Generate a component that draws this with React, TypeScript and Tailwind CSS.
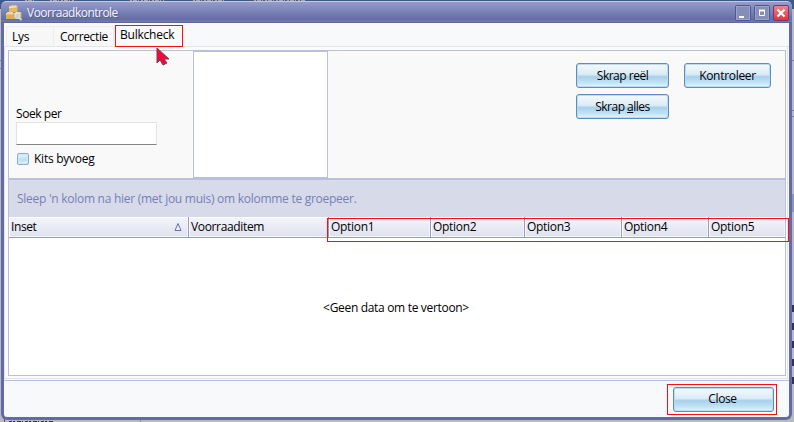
import React from 'react';

const columns = [
  { name: 'Inset', box: 'w-[180px]', spacing: 'tracking-[-0.4px]' },
  { name: 'Voorraaditem', box: 'w-[140px]', spacing: 'tracking-[-0.35px]' },
  { name: 'Option1', box: 'w-[102px]', spacing: 'tracking-[-0.3px]' },
  { name: 'Option2', box: 'w-[94px]', spacing: 'tracking-[-0.3px]' },
  { name: 'Option3', box: 'w-[97px]', spacing: 'tracking-[-0.3px]' },
  { name: 'Option4', box: 'w-[87px]', spacing: 'tracking-[-0.3px]' },
  { name: 'Option5', box: 'w-[76px] border-r-0', spacing: 'tracking-[-0.3px]' },
];

function Button({ className, children }: { className: string; children: React.ReactNode }) {
  return (
    <button
      className={`flex h-[25px] items-center justify-center rounded-[3px] border border-[#5b8dc0] bg-[linear-gradient(180deg,#f4fafd_0%,#dcebf6_45%,#a9d0ea_55%,#bfe2f6_80%,#e3f8ff_100%)] leading-4 shadow-[inset_0_0_0_1px_#bedaee] ${className}`}
    >
      {children}
    </button>
  );
}

function CratesIcon() {
  return (
    <svg width="17" height="16" viewBox="0 0 17 16" className="shrink-0">
      <path d="M3 1.5 6 .5h4l1.5 1V7H3Z" fill="#e3b768" />
      <path d="M3 1.5 6 .5h4l1.5 1L8.5 3H3Z" fill="#f4daa2" />
      <path d="M0 8.5 2 7h4.5L8 8.5V14H0Z" fill="#dcae5c" />
      <path d="M0 8.5 2 7h4.5L8 8.5 6 9.5H0Z" fill="#f4d59a" />
      <path d="M8 8.5 10 7h4l1.5 1.5V14H8Z" fill="#d3ad70" />
      <path d="M8 8.5 10 7h4l1.5 1.5L13 9.5H8Z" fill="#f2d9a6" />
      <circle cx="11.5" cy="11" r="2.5" fill="#c3d2da" stroke="#e4e6e2" />
      <path d="m13.2 13 2.2 2.2" stroke="#c6dbea" strokeWidth="1.7" />
    </svg>
  );
}

function TitleBar() {
  return (
    <div className="flex h-[22px] w-full shrink-0 items-center rounded-t-[5px] border-t border-[#c3c7e1] bg-[linear-gradient(180deg,#969dca_0%,#8087bb_35%,#6970a8_78%,#656ca4_87%,#7a82b3_90%,#565e98_100%)] pl-[5px] pr-[3px] text-[#f3f4fb]">
      <CratesIcon />
      <span className="ml-[4px] tracking-[-0.52px] leading-4 [text-shadow:1px_1px_0_#565e98]">Voorraadkontrole</span>
      <div className="ml-auto flex gap-[3px]">
        <svg width="16" height="16" viewBox="0 0 16 16">
          <rect x=".5" y=".5" width="15" height="15" rx="1.5" fill="#858db9" stroke="#4e5791" />
          <rect x="1.5" y="1.5" width="13" height="13" fill="none" stroke="#9ca2ca" />
          <path d="M4 11h5v2H4z" fill="#fff" />
        </svg>
        <svg width="16" height="16" viewBox="0 0 16 16">
          <rect x=".5" y=".5" width="15" height="15" rx="1.5" fill="#858db9" stroke="#4e5791" />
          <rect x="1.5" y="1.5" width="13" height="13" fill="none" stroke="#9ca2ca" />
          <path d="M5.5 5.5h5v5h-5z" fill="none" stroke="#fff" />
          <path d="M5 5.5h6" stroke="#fff" strokeWidth="2" />
        </svg>
        <svg width="16" height="16" viewBox="0 0 16 16">
          <defs>
            <linearGradient id="closeRed" x2="0" y2="1">
              <stop stopColor="#ee8890" />
              <stop offset="1" stopColor="#ea2e32" />
            </linearGradient>
          </defs>
          <rect x=".5" y=".5" width="15" height="15" rx="1.5" fill="url(#closeRed)" stroke="#6b3c78" />
          <path d="m4.5 4.5 7 7m0-7-7 7" stroke="#fff" strokeWidth="2.3" />
        </svg>
      </div>
    </div>
  );
}

/* Slivers of the application behind the window. */
function Backdrop() {
  return (
    <svg width="794" height="422" className="absolute left-0 top-0">
      <path d="M0 0h794v9H0z" fill="#3b5a8c" />
      <path d="M25 .5h10m15 0h24m56 0h34m29 0h33m28 0h51" stroke="#a9a5ae" strokeDasharray="2 1 4 1 1 2" />
      <path d="M0 60.5h2M0 68.5h2M792 60.5h2M792 110.5h2M792 116.5h2" stroke="#81838d" />
      <path d="M792 194h2v18h-2z" fill="#9296ad" />
      <path d="M793 305v7m0 11v7m0 11v7m0 11v7m0 11v7" stroke="#383346" strokeWidth="2" />
      <path d="M9 421.5h44" stroke="#332f55" strokeDasharray="3 1 2 2 4 1 1 2" />
      <path d="M4.5 419v3" stroke="#8d3040" />
      <path d="M140.5 420v2" stroke="#8b8c94" />
    </svg>
  );
}

export default function App() {
  return (
    <div className="relative h-[422px] w-[794px] overflow-hidden bg-[#b9babf] font-['Open_Sans','Noto_Sans',sans-serif] text-[12px] text-black">
      <Backdrop />
      <div className="relative ml-px flex h-[420px] w-[791px] flex-col rounded-[6px] bg-[#626ba5] pt-px [clip-path:inset(1px_0_0_0_round_5px)]">
        <TitleBar />
        <div className="ml-[3px] flex h-[394px] w-[785px] shrink-0 flex-col rounded-b-[3px] bg-[#f8f9fb] pt-px">
          <div className="flex h-[23px] shrink-0 items-end border-b border-[#e4e5e8] pl-[2px]">
            <div className="h-[20px] w-[48px] border border-b-0 border-[#ecedef] bg-[#f7f7f7] pl-[5px] tracking-[-0.3px] leading-[19px]">Lys</div>
            <div className="h-[20px] w-[60px] border border-l-0 border-b-0 border-[#ecedef] bg-[#f7f7f7] pl-[6px] tracking-[-0.35px] leading-[19px]">Correctie</div>
            <div className="mb-[-1px] ml-px flex h-[22px] w-[68px] items-start border border-[#ff0c0c] bg-[#f9f9f9] pl-[4px] tracking-[-0.22px] leading-[17px]">Bulkcheck</div>
          </div>

          <div className="h-[332px] w-[784px] shrink-0 border-x border-b border-[#e3e4e8] bg-[#fbfbfc] pl-[3px] pr-[2px] pt-[3px]">
            <div className="flex h-[326px] w-[778px] flex-col border border-[#b9c0dc] bg-[#f9f9f9]">
              <div className="flex h-[127px] shrink-0">
                <div className="flex w-[184px] flex-col pl-[7px] pt-[55px]">
                  <label className="flex flex-col">
                    <span className="h-[16px] tracking-[-0.42px] leading-[16px]">Soek per</span>
                    <input className="h-[23px] w-[141px] border border-[#e3e3e3] border-b-[#858585] bg-white outline-none" />
                  </label>
                  <label className="mt-[6px] flex items-center pl-px leading-4">
                    <input type="checkbox" className="size-3 appearance-none rounded-[2px] border border-[#86b0d2] bg-[linear-gradient(180deg,#e9f5fc,#b9def4_60%,#e4f7ff)] shadow-[inset_0_0_0_1px_#d3e8f5]" />
                    <span className="ml-[5px] tracking-[-0.25px]">Kits byvoeg</span>
                  </label>
                </div>
                <div className="w-[135px] border border-[#b9c0d9] bg-white" />
                <div className="ml-auto flex gap-[15px] pr-[14px] pt-[12px]">
                  <div className="flex flex-col gap-[6px]">
                    <Button className="w-[93px] tracking-[-0.5px]">Skrap reël</Button>
                    <Button className="w-[93px] tracking-[-0.5px]"><span>Skrap <u>a</u>lles</span></Button>
                  </div>
                  <Button className="w-[87px] tracking-[-0.3px]">Kontroleer</Button>
                </div>
              </div>

              <div className="h-[39px] shrink-0 border-t-2 border-[#bbc0da] bg-[#d7dae9] pl-[8px] pt-[11px] tracking-[-0.27px] leading-4 text-[#777fb9]">
                Sleep 'n kolom na hier (met jou muis) om kolomme te groepeer.
              </div>
              <div className="relative z-10 flex h-[21px] shrink-0 border-b border-[#959dcd] bg-[linear-gradient(180deg,#f4f5fb,#dfe1ee)]">
                {columns.map((column, index) => (
                  <div key={column.name} className={`${column.box} ${column.spacing} flex shrink-0 items-center border-r border-[#929bc9] pl-[2px] leading-4 shadow-[inset_1px_1px_0_#fff,inset_-1px_-1px_0_#f4f5fa]`}>
                    {column.name}
                    {index === 0 && (
                      <svg width="8" height="9" viewBox="0 0 8 9" className="ml-auto mr-[6px]">
                        <path d="m1 7.5 3-7 3 7Z" fill="#f0f1fa" stroke="#6570ad" />
                      </svg>
                    )}
                  </div>
                ))}
                <div className="pointer-events-none absolute left-[318px] top-[1px] h-[24px] w-[462px] border border-[#ff0c0c]" />
              </div>
              <div className="flex grow items-center justify-center bg-white pt-[2px] pr-[2px]">
                <span className="tracking-[-0.32px]">&lt;Geen data om te vertoon&gt;</span>
              </div>
            </div>
          </div>
          <div className="mt-px flex grow justify-end rounded-bl-[3px] border-t border-[#b9c1df] pr-[12px] pt-[3px]">
            <div className="h-[31px] w-[110px] border border-[#ff0c0c] pl-[5px] pt-[2px]">
              <Button className="w-[101px] pb-px pr-[2px] tracking-[-0.4px]">Close</Button>
            </div>
          </div>
        </div>
      </div>
      <svg width="16" height="20" viewBox="0 0 16 20" className="absolute left-[156px] top-[47px]">
        <path d="M1 1v15l3-3 3 5 4-2-3-4h5Z" fill="#f00b3f" stroke="#82394c" />
      </svg>
    </div>
  );
}
